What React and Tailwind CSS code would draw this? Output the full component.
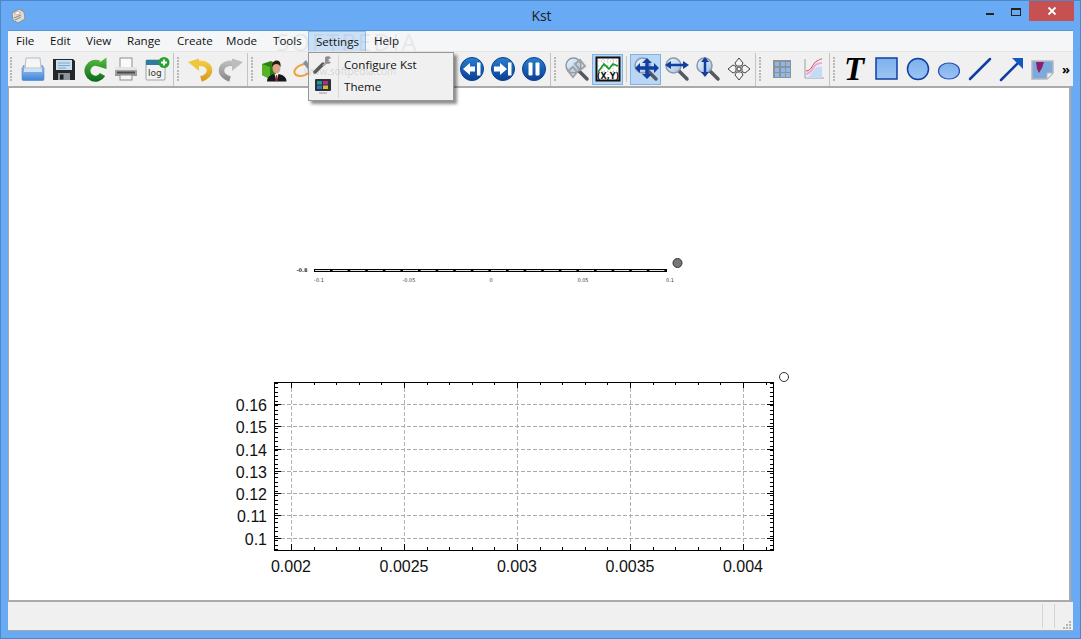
import React from "react";

const uiFont = { fontFamily: '"Open Sans", "Noto Sans", sans-serif' };

function Defs() {
  return (
    <svg width="0" height="0" className="absolute">
      <defs>
        <linearGradient id="blueFill" x1="0" y1="0" x2="0" y2="1">
          <stop offset="0" stopColor="#a9cdf5" />
          <stop offset="1" stopColor="#3f83d8" />
        </linearGradient>
        <linearGradient id="roundFill" x1="0" y1="0" x2="0" y2="1">
          <stop offset="0" stopColor="#7db0ec" />
          <stop offset="1" stopColor="#9cc4f3" />
        </linearGradient>
        <linearGradient id="ballBlue" x1="0" y1="0" x2="0" y2="1">
          <stop offset="0" stopColor="#2a7fd0" />
          <stop offset="1" stopColor="#0a3f96" />
        </linearGradient>
        <linearGradient id="greenFill" gradientUnits="userSpaceOnUse" x1="0" y1="2" x2="0" y2="25">
          <stop offset="0" stopColor="#57bb40" />
          <stop offset="1" stopColor="#0b6a1a" />
        </linearGradient>
        <linearGradient id="yellowFill" gradientUnits="userSpaceOnUse" x1="0" y1="2" x2="0" y2="24">
          <stop offset="0" stopColor="#f7d64e" />
          <stop offset="1" stopColor="#d89c1a" />
        </linearGradient>
        <linearGradient id="grayFill" gradientUnits="userSpaceOnUse" x1="0" y1="2" x2="0" y2="24">
          <stop offset="0" stopColor="#c8c8c8" />
          <stop offset="1" stopColor="#8a8a8a" />
        </linearGradient>
        <linearGradient id="lensFill" x1="0" y1="0" x2="1" y2="1">
          <stop offset="0" stopColor="#f2f7fd" />
          <stop offset="1" stopColor="#9dc0e8" />
        </linearGradient>
      </defs>
    </svg>
  );
}

function Ico({ children, w = 26 }) {
  return (
    <svg width={w} height={w} viewBox="0 0 26 26">
      {children}
    </svg>
  );
}

const OpenIcon = () => (
  <Ico>
    <path d="M6 2h14l1 10H5z" fill="#f4f6f8" stroke="#b5bcc4" />
    <path d="M4 9l-2 3v11a1.500 1.500 0 0 0 1.500 1.500h19A1.500 1.500 0 0 0 24 23V12l-2-3v5H4z" fill="url(#blueFill)" stroke="#4f86c6" strokeWidth=".6" />
    <rect x="4" y="13" width="18" height="3" fill="#cfe2f8" />
  </Ico>
);

const SaveIcon = () => (
  <Ico>
    <path d="M2 3h20l2 2v19H2z" fill="#23262b" />
    <rect x="5" y="4" width="16" height="10" fill="#c9dff2" />
    <path d="M7 7h12M7 9.500h12M7 12h8" stroke="#7fa5c9" strokeWidth="1" />
    <rect x="7" y="17" width="12" height="7" fill="#8f949a" />
    <rect x="9" y="18.500" width="3.500" height="5" fill="#1d1f22" />
  </Ico>
);

const ReloadIcon = () => (
  <Ico>
    <path d="M17 7.500A8 8 0 1 0 20.500 18.500" fill="none" stroke="url(#greenFill)" strokeWidth="6" />
    <path d="M13 9.500L24.500 13V1.500z" fill="url(#greenFill)" />
  </Ico>
);

const PrintIcon = () => (
  <Ico>
    <rect x="7" y="2" width="12" height="10" fill="#fafafa" stroke="#8d8d8d" />
    <path d="M2 12h22v8H2z" fill="url(#grayFill)" />
    <rect x="2" y="11" width="22" height="3" fill="#e4e4e4" />
    <rect x="4" y="15.500" width="18" height="2" fill="#4b4b4b" />
    <rect x="7" y="19" width="12" height="5" fill="#f5f5f5" stroke="#8d8d8d" />
  </Ico>
);

const LogIcon = () => (
  <Ico>
    <rect x="2" y="4" width="19" height="20" rx="1" fill="#f3f3ef" stroke="#9aa5ad" />
    <rect x="2" y="4" width="19" height="5" fill="#2f7d9e" />
    <text x="4" y="20" fontSize="9" fontFamily="DejaVu Sans" fill="#333">log</text>
    <circle cx="20" cy="6.500" r="5.500" fill="#25a32f" />
    <path d="M20 3.500v6M17 6.500h6" stroke="#fff" strokeWidth="2" />
  </Ico>
);

const UndoIcon = ({ gray }) => (
  <Ico>
    <g transform={gray ? "translate(26 0) scale(-1 1)" : undefined}>
      <path
        d="M8 8.500C14 5.500 22 8 22.500 14C22.800 18 19 21.500 14 23"
        fill="none"
        stroke={gray ? "url(#grayFill)" : "url(#yellowFill)"}
        strokeWidth="5.500"
      />
      <path d="M1 6L12 2.500V15z" fill={gray ? "#bdbdbd" : "#f0c63c"} />
    </g>
  </Ico>
);

const UserIcon = () => (
  <Ico>
    <path d="M1 8l9 -3 5 3v12l-6 3 -8 -4z" fill="#2f7f16" />
    <path d="M1 8l8 3v12l-8 -4z" fill="#56b324" />
    <path d="M6 25.500c0 -5 4 -7.500 9.500 -7.500s10 2.500 10 7.500z" fill="#15181c" />
    <path d="M13.500 18h4l-2 7z" fill="#f2f2f2" />
    <path d="M15 19h1l.6 6h-2.200z" fill="#b3232a" />
    <ellipse cx="15.500" cy="12" rx="4" ry="5.500" fill="#d9a88a" />
    <path d="M11 11c-.5 -5 3 -7 5 -6.500 3 0 4 3 3.500 6.500 -1 -2 -2 -3 -4 -3 -2 0 -3.500 1 -4.500 3z" fill="#2e1c12" />
  </Ico>
);

const PenIcon = () => (
  <Ico>
    <ellipse cx="11" cy="14" rx="9" ry="5.500" fill="none" stroke="#f0a040" strokeWidth="2" transform="rotate(-20 11 14)" />
    <path d="M14 4l9 14 -2 2 -10 -13z" fill="#8a8f95" />
  </Ico>
);

const RoundIcon = ({ kind }) => (
  <Ico>
    <circle cx="13" cy="13" r="11.500" fill="url(#ballBlue)" stroke="#0b3f8f" />
    {kind === "back" && (
      <g fill="#fff">
        <path d="M4 13l7 -6v3.500h5v5h-5v3.500z" />
        <rect x="18" y="6.500" width="3.500" height="13" />
      </g>
    )}
    {kind === "next" && (
      <g fill="#fff">
        <path d="M17 13l-7 -6v3.500h-6v5h6v3.500z" />
        <rect x="18" y="6.500" width="3.500" height="13" />
      </g>
    )}
    {kind === "pause" && (
      <g fill="#fff">
        <rect x="7.500" y="6.500" width="4" height="13" rx="1" />
        <rect x="14.500" y="6.500" width="4" height="13" rx="1" />
      </g>
    )}
  </Ico>
);

function Lens({ children }) {
  return (
    <Ico>
      <path d="M15 15l8 8" stroke="#55595e" strokeWidth="3.500" strokeLinecap="round" />
      <circle cx="9.500" cy="9.500" r="7.500" fill="url(#lensFill)" stroke="#8a98a8" strokeWidth="1.500" />
      {children}
    </Ico>
  );
}

const ZoomLinkIcon = () => (
  <Lens>
    <g fill="none" stroke="#a2a2a2" strokeWidth="2">
      <path d="M4 15l5 -4 4 5 -4 5z" />
      <path d="M11 8l5 -4 5 6 -5 4z" />
    </g>
  </Lens>
);

const XYIcon = () => (
  <Ico>
    <rect x="1.500" y="1.500" width="23" height="23" fill="#fff" stroke="#111" strokeWidth="2" />
    <path d="M3 5h20M3 10h20M3 15h20M8 3v20M13 3v20M18 3v20" stroke="#999" strokeDasharray="1 2" strokeWidth=".7" />
    <path d="M3 16l6 -8 5 5 4 -5 5 2" fill="none" stroke="#1a9a25" strokeWidth="1.800" />
    <text x="13" y="23" textAnchor="middle" fontSize="8" fontWeight="700" fontFamily="DejaVu Sans" fill="#111">(X,Y)</text>
  </Ico>
);

const ZoomBothIcon = () => (
  <Lens>
    <path d="M14 7v11M6 12h16" stroke="#123f9f" strokeWidth="3.500" />
    <path d="M14 2l5 5h-10zM14 23l5 -5h-10zM2 12l5 -5v10zM26 12l-5 -5v10z" fill="#123f9f" />
  </Lens>
);

const ZoomHorizIcon = () => (
  <Lens>
    <path d="M6 9h14" stroke="#123f9f" strokeWidth="2.500" />
    <path d="M1 9l6 -4v8zM25 9l-6 -4v8z" fill="#123f9f" />
  </Lens>
);

const ZoomVertIcon = () => (
  <Lens>
    <path d="M10 5v13" stroke="#123f9f" strokeWidth="2.500" />
    <path d="M10 1l4 5h-8zM10 21l4 -5h-8z" fill="#123f9f" />
  </Lens>
);

const MoveIcon = () => (
  <Ico>
    <g fill="#f4f4f4" stroke="#444" strokeWidth="1">
      <path d="M13 2l4 5 -1.500 3h-5L9 7z" />
      <path d="M13 24l4 -5 -1.500 -3h-5L9 19z" />
      <path d="M2 13l5 -4 3 1.500v5L7 17z" />
      <path d="M24 13l-5 -4 -3 1.500v5l3 1.500z" />
      <circle cx="13" cy="13" r="2" />
    </g>
  </Ico>
);

const TableIcon = () => (
  <Ico>
    <rect x="4" y="4" width="18" height="18" fill="#8d9297" />
    {[6, 12, 17].map(x =>
      [6, 12, 17].map(y => <rect key={x + "-" + y} x={x} y={y} width="4" height="4" fill="#8db9ea" />)
    )}
  </Ico>
);

const CurvesIcon = () => (
  <Ico>
    <path d="M5 3v19h19" fill="none" stroke="#9aa0a6" strokeWidth="1" />
    <path d="M6 21c6 0 6 -8 11 -10 3 -1 4 0 5 0v11H6z" fill="#c5daf5" />
    <path d="M6 18c6 0 7 -9 11 -10 3 -1 4 -1 5 -1" fill="none" stroke="#f0a8d8" strokeWidth="2" />
    <path d="M6 15c6 0 7 -9 11 -10 2 -1 3 -2 5 -2" fill="none" stroke="#c0563f" strokeWidth="1" />
  </Ico>
);

const TextIcon = () => (
  <span className="text-[33px] leading-none font-bold italic text-black mr-[3px]" style={{ fontFamily: '"Liberation Serif", serif' }}>
    T
  </span>
);

const RectIcon = () => (
  <Ico>
    <rect x="2" y="2" width="21" height="21" fill="url(#roundFill)" stroke="#0d3fa6" strokeWidth="1.500" />
  </Ico>
);

const CircleIcon = () => (
  <Ico>
    <circle cx="13" cy="13" r="10.500" fill="url(#roundFill)" stroke="#0d3fa6" strokeWidth="1.500" />
  </Ico>
);

const EllipseIcon = () => (
  <Ico>
    <ellipse cx="13" cy="15" rx="10.500" ry="8" fill="url(#roundFill)" stroke="#2a50b8" strokeWidth="1.200" />
  </Ico>
);

const LineIcon = () => (
  <Ico>
    <path d="M3 23L23 3" stroke="#0d3fa6" strokeWidth="2.500" strokeLinecap="round" />
  </Ico>
);

const ArrowIcon = () => (
  <Ico>
    <path d="M3 24L21 6" stroke="#0d3fa6" strokeWidth="2.500" strokeLinecap="round" />
    <path d="M14 2h11v11z" fill="#1457c0" />
  </Ico>
);

const PictureIcon = () => (
  <Ico>
    <path d="M3 5h21v12l-6 6H3z" fill="#7ea9dd" stroke="#b4b8bd" strokeWidth="1.500" />
    <path d="M24 17h-6v6z" fill="#f2f2f2" stroke="#b4b8bd" />
    <path d="M7 6h8l-2 6 -3 5 -2 -4z" fill="#8e1f6a" />
  </Ico>
);

const WrenchIcon = () => (
  <svg width="20" height="20" viewBox="0 0 20 20">
    <path d="M2 17l8 -8" stroke="#5a5a5a" strokeWidth="3.500" strokeLinecap="round" />
    <path d="M10 11l6 -6" stroke="#a9a9a9" strokeWidth="2" />
    <path d="M12 2c2 -1 5 -1 6 1l-3 1.500v2L18 7c-1 2 -4 2.500 -6 1z" fill="#8f8f8f" />
  </svg>
);

const ThemeIcon = () => (
  <svg width="20" height="20" viewBox="0 0 20 20">
    <rect x="2" y="2" width="16" height="12" rx="1" fill="#2b3238" />
    <rect x="4" y="4" width="5" height="3.500" fill="#1d9b8e" />
    <rect x="10" y="4" width="5" height="3.500" fill="#b02a8f" />
    <rect x="4" y="8.500" width="5" height="3.500" fill="#2a6fc0" />
    <rect x="10" y="8.500" width="5" height="3.500" fill="#d6b92a" />
    <path d="M6 16h8" stroke="#c4c4c4" strokeWidth="2" />
  </svg>
);

function Grip() {
  return (
    <div className="w-[5px] h-[24px] mx-[2px] flex flex-col justify-between shrink-0">
      {[0, 1, 2, 3, 4, 5, 6, 7].map(i => (
        <div key={i} className="w-[2px] h-[2px] bg-[#b9b9b9]" />
      ))}
    </div>
  );
}

function Btn({ children, active }) {
  return (
    <div
      className={
        "w-[31px] h-[31px] shrink-0 flex items-center justify-center border " +
        (active ? "bg-[#b9d7f5] border-[#7fb2e5]" : "border-transparent")
      }
    >
      {children}
    </div>
  );
}

function Sep() {
  return <div className="w-[1px] h-[33px] bg-[#c4c4c4] mx-[1px] shrink-0" />;
}

const menuItems = [
  ["File", "w-[34px] pl-2"],
  ["Edit", "w-[36px] pl-2"],
  ["View", "w-[41px] pl-2"],
  ["Range", "w-[50px] pl-2"],
  ["Create", "w-[49px] pl-2"],
  ["Mode", "w-[47px] pl-2"],
  ["Tools", "w-[43px] pl-2"],
  ["Settings", "w-[58px] pl-[7px] bg-[#c9e0f7] border-x border-t border-[#90bce8]"],
  ["Help", "w-[50px] pl-2"],
];

function Plot1() {
  const ticks = [];
  for (let x = 315; x < 667; x += 17.6) ticks.push(x);
  return (
    <svg className="absolute left-[271px] top-[163px]" width="420" height="40" viewBox="280 251 420 40">
      <rect x="314" y="269" width="353" height="3" fill="#000" />
      {ticks.map(x => (
        <rect key={x} x={x} y="270" width="15" height="1" fill="#e4e4e4" />
      ))}
      <g fontFamily="DejaVu Sans" fontSize="5" fill="#333">
        <text x="302" y="272" textAnchor="middle" fontWeight="700">-0.8</text>
        <text x="319" y="282" textAnchor="middle">-0.1</text>
        <text x="409" y="282" textAnchor="middle">-0.05</text>
        <text x="491" y="282" textAnchor="middle">0</text>
        <text x="583" y="282" textAnchor="middle">0.05</text>
        <text x="670" y="282" textAnchor="middle">0.1</text>
      </g>
      <circle cx="677.500" cy="263" r="4.500" fill="#777" stroke="#333" />
    </svg>
  );
}

function Plot2() {
  const xs = [291, 404, 517, 630, 743];
  const ys = [404.5, 426.5, 449.5, 471.5, 493.5, 515.5, 538.5];
  const yLabels = ["0.16", "0.15", "0.14", "0.13", "0.12", "0.11", "0.1"];
  const xLabels = ["0.002", "0.0025", "0.003", "0.0035", "0.004"];
  const minorX = [];
  for (let x = 291 - 22.6; x < 773; x += 22.6) if (x > 275) minorX.push(Math.round(x) + 0.5);
  const minorY = [];
  for (let y = 382 + 0.5; y < 550; y += 4.5) minorY.push(Math.round(y) + 0.5);
  return (
    <svg className="absolute left-[211px] top-[280px]" width="580" height="300" viewBox="220 368 580 300">
      {xs.map(x => (
        <path key={x} d={`M${x + 0.5} 382V550`} stroke="#b5b5b5" strokeDasharray="4 2" />
      ))}
      {ys.map(y => (
        <path key={y} d={`M275 ${y}H773`} stroke="#aaa" strokeDasharray="4 2" />
      ))}
      {minorX.map(x => (
        <g key={x} stroke="#000">
          <path d={`M${x} 382v3M${x} 550v-3`} />
        </g>
      ))}
      {minorY.map(y => (
        <g key={y} stroke="#000">
          <path d={`M275 ${y}h3M773 ${y}h-3`} />
        </g>
      ))}
      {xs.map(x => (
        <path key={x} d={`M${x + 0.5} 382v6M${x + 0.5} 550v-6`} stroke="#000" />
      ))}
      {ys.map(y => (
        <path key={y} d={`M275 ${y}h6M773 ${y}h-6`} stroke="#000" />
      ))}
      <rect x="274.500" y="382.500" width="499" height="168" fill="none" stroke="#000" />
      <g fontFamily="Liberation Sans" fontSize="16" fill="#111">
        {yLabels.map((t, i) => (
          <text key={t} x="267" y={ys[i] + 6.5} textAnchor="end">{t}</text>
        ))}
        {xLabels.map((t, i) => (
          <text key={t} x={xs[i]} y="572" textAnchor="middle">{t}</text>
        ))}
      </g>
      <circle cx="784" cy="377" r="4.500" fill="#fff" stroke="#333" />
    </svg>
  );
}

export default function App() {
  return (
    <div className="w-[1081px] h-[639px] bg-[#69aaf5] border border-[#4d87c7] flex flex-col overflow-hidden relative" style={uiFont}>
      <Defs />
      {/* title bar */}
      <div className="h-[29px] relative flex items-center shrink-0">
        <svg className="ml-[9px]" width="16" height="16" viewBox="0 0 16 16">
          <path d="M2 5l7 -4 5 3 1 7 -7 4 -5 -3z" fill="#dcdcd8" stroke="#8f8f8f" />
          <path d="M4 5l4 -2 3 2 -4 2z" fill="#f4f4f4" stroke="#c98a8a" strokeWidth=".6" />
          <path d="M4 10l7 -3M5 12l6 -3" stroke="#8a8a8a" />
        </svg>
        <div className="flex-1 text-center text-[14px] text-[#1c1c1c] pl-[80px]">Kst</div>
        <div className="flex items-start h-full">
          <div className="w-[26px] h-full flex justify-center pt-[12px]">
            <div className="w-[8px] h-[2px] bg-[#222]" />
          </div>
          <div className="w-[26px] h-full flex justify-center pt-[7px]">
            <div className="w-[10px] h-[8px] border border-t-2 border-[#222]" />
          </div>
          <div className="w-[45px] h-[20px] bg-[#c75050] flex items-center justify-center mr-[6px]">
            <svg width="10" height="10" viewBox="0 0 10 10">
              <path d="M1.500 1.500l7 7M8.500 1.500l-7 7" stroke="#fff" strokeWidth="1.800" />
            </svg>
          </div>
        </div>
      </div>

      {/* client */}
      <div className="ml-[7px] mr-[7px] h-[601px] flex flex-col relative border-t border-[#5b93d2]">
        <div className="h-[21px] bg-[#f5f6f7] flex items-stretch text-[11.6px] text-[#111] shrink-0 border-b border-[#e6e6e6]">
          {menuItems.map(([label, cls]) => (
            <div key={label} className={"flex items-center " + cls}>
              {label}
            </div>
          ))}
        </div>

        <div className="h-[34px] bg-[#f0f0f0] flex items-center shrink-0">
          <Grip />
          <Btn><OpenIcon /></Btn>
          <Btn><SaveIcon /></Btn>
          <Btn><ReloadIcon /></Btn>
          <Btn><PrintIcon /></Btn>
          <Btn><LogIcon /></Btn>
          <Sep />
          <Grip />
          <Btn><UndoIcon /></Btn>
          <Btn><UndoIcon gray /></Btn>
          <Sep />
          <Grip />
          <Btn><UserIcon /></Btn>
          <Btn><PenIcon /></Btn>
          <div className="w-[136px] shrink-0" />
          <Btn><RoundIcon kind="back" /></Btn>
          <Btn><RoundIcon kind="next" /></Btn>
          <Btn><RoundIcon kind="pause" /></Btn>
          <Sep />
          <Grip />
          <Btn><ZoomLinkIcon /></Btn>
          <Btn active><XYIcon /></Btn>
          <div className="w-[1px] h-[26px] bg-[#c8c8c8] mx-[3px] shrink-0" />
          <Btn active><ZoomBothIcon /></Btn>
          <Btn><ZoomHorizIcon /></Btn>
          <Btn><ZoomVertIcon /></Btn>
          <Btn><MoveIcon /></Btn>
          <Sep />
          <Grip />
          <Btn><TableIcon /></Btn>
          <Btn><CurvesIcon /></Btn>
          <Sep />
          <Grip />
          <Btn><TextIcon /></Btn>
          <Btn><RectIcon /></Btn>
          <Btn><CircleIcon /></Btn>
          <Btn><EllipseIcon /></Btn>
          <Btn><LineIcon /></Btn>
          <Btn><ArrowIcon /></Btn>
          <Btn><PictureIcon /></Btn>
          <div className="ml-[5px] text-[13px] leading-none font-bold text-black">»</div>
        </div>

        {/* canvas */}
        <div className="flex-1 relative bg-white border-t-2 border-b-2 border-r-2 border-l border-[#aaaaaa] mr-[2px]">
          <Plot1 />
          <Plot2 />
        </div>

        {/* status bar */}
        <div className="h-[29px] bg-[#f0f0f0] border-b border-[#a8a8a8] shrink-0 flex items-stretch justify-end py-[2px]">
          <div className="w-[1px] bg-[#d4d4d4] mr-[11px]" />
          <div className="w-[1px] bg-[#d4d4d4] mr-[18px]" />
          <svg className="absolute right-[1px] bottom-[1px]" width="10" height="10" viewBox="0 0 10 10">
            <path d="M7 1h2v2H7zM4 4h2v2H4zM7 4h2v2H7zM1 7h2v2H1zM4 7h2v2H4zM7 7h2v2H7z" fill="#b5b5b5" />
          </svg>
        </div>

        {/* settings dropdown */}
        <div className="absolute left-[300px] top-[21px] w-[146px] h-[49px] bg-[#f0f0f0] border border-[#979797] shadow-[3px_3px_3px_rgba(0,0,0,0.45)] flex flex-col justify-start text-[11.6px] text-[#111]">
          <div className="absolute left-[29px] top-[2px] bottom-[2px] w-[1px] bg-[#d8d8d8]" />
          <div className="h-[23px] flex items-center">
            <div className="w-[30px] pl-[4px]"><WrenchIcon /></div>
            <div className="pl-[5px]">Configure Kst</div>
          </div>
          <div className="h-[22px] flex items-center">
            <div className="w-[30px] pl-[4px]"><ThemeIcon /></div>
            <div className="pl-[5px]">Theme</div>
          </div>
        </div>

        {/* faint watermark over the menu */}
        <div className="absolute left-[268px] top-[-1px] text-[24px] leading-none tracking-[2px] text-[#8a8a8a]/15 pointer-events-none">
          SOFTPEDIA
        </div>
        <div className="absolute left-[296px] top-[35px] text-[10px] leading-none text-[#777777]/25 pointer-events-none">
          www.softpedia.com
        </div>
      </div>
    </div>
  );
}
